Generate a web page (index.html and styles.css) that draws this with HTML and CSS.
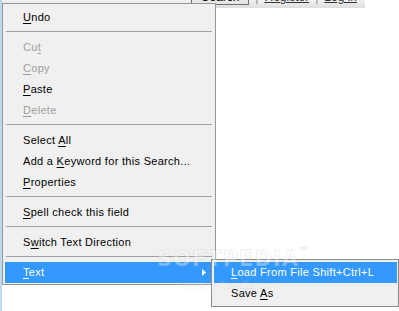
FILE: index.html
```html
<!DOCTYPE html>
<html>
<head>
<meta charset="utf-8">
<link rel="stylesheet" href="styles.css">
</head>
<body>
<div class="page">
  <div class="topbar">
    <div class="toplinks">
      <span class="btn">Search</span>
      <span class="pipe">|</span>
      <a class="lnk">Register</a>
      <span class="pipe">|</span>
      <a class="lnk">Log in</a>
    </div>
  </div>
  <div class="content"></div>
</div>

<div class="menu main">
  <div class="item"><span><u>U</u>ndo</span></div>
  <div class="sep"></div>
  <div class="item dis"><span>Cu<u>t</u></span></div>
  <div class="item dis"><span><u>C</u>opy</span></div>
  <div class="item"><span><u>P</u>aste</span></div>
  <div class="item dis"><span><u>D</u>elete</span></div>
  <div class="sep"></div>
  <div class="item"><span>Select <u>A</u>ll</span></div>
  <div class="item"><span>Add a <u>K</u>eyword for this Search...</span></div>
  <div class="item"><span><u>P</u>roperties</span></div>
  <div class="sep"></div>
  <div class="item"><span><u>S</u>pell check this field</span></div>
  <div class="sep"></div>
  <div class="item"><span>S<u>w</u>itch Text Direction</span></div>
  <div class="sep"></div>
  <div class="item hl"><span><u>T</u>ext</span><svg class="arrow" width="4" height="7" viewBox="0 0 4 7"><path d="M0 0 L4 3.5 L0 7 Z" fill="#fff"/></svg></div>
</div>

<div class="menu sub">
  <div class="item hl"><span><u>L</u>oad From File Shift+Ctrl+L</span></div>
  <div class="item"><span>Save <u>A</u>s</span></div>
</div>

<div class="watermark">
  <div class="wm-big">SOFTPEDIA<sup>™</sup></div>
  <div class="wm-small">www.softpedia.com</div>
</div>
</body>
</html>
```

FILE: styles.css
```css
html, body {
  margin: 0;
  padding: 0;
}
body {
  width: 399px;
  height: 311px;
  overflow: hidden;
  background: #ffffff;
  font-family: "Liberation Sans", Arial, sans-serif;
  font-size: 11px;
  color: #000;
  position: relative;
}
.page {
  display: flex;
  flex-direction: column;
  height: 311px;
  border-left: 2px solid #bcd9ee;
  box-sizing: border-box;
}
.topbar {
  width: 363px;
  height: 8px;
  overflow: hidden;
  background: linear-gradient(#f2f2f2, #dedede);
  display: flex;
  justify-content: flex-end;
}
.toplinks {
  display: flex;
  align-items: flex-start;
  gap: 6px;
  margin-top: -9px;
  padding-right: 8px;
  height: 14px;
  line-height: 13px;
}
.btn {
  border: 1px solid #707070;
  border-top: none;
  background: linear-gradient(#f6f6f6, #e4e4e4);
  padding: 0 9px;
  height: 13px;
  font-size: 12px;
}
.pipe {
  color: #888;
  font-size: 12px;
}
.lnk {
  color: #333;
  text-decoration: underline;
  font-size: 12px;
}
.content {
  flex: 1;
}

.menu {
  position: absolute;
  box-sizing: border-box;
  background: #f0f0f0;
  border: 1px solid #979797;
}
.main {
  left: 2px;
  top: 3px;
  width: 214px;
  padding: 3px 3px 1px 2px;
}
.sub {
  left: 211px;
  top: 259px;
  width: 188px;
  padding: 2px 1px 2px 2px;
  border-color: #8a8a8a;
}
.item {
  height: 21px;
  line-height: 21px;
  padding-left: 18px;
  padding-right: 6px;
  display: flex;
  align-items: center;
  justify-content: space-between;
  white-space: nowrap;
  letter-spacing: 0.3px;
}
.sub .item {
  padding-left: 17px;
}
.item.dis {
  color: #a0a0a0;
}
.item.hl {
  background: #3399ff;
  color: #fff;
}
.item u {
  text-decoration-thickness: 1px;
  text-underline-offset: 2px;
}
.sep {
  height: 1px;
  margin: 3px 0 5px 1px;
  background: #a0a0a0;
}
.arrow {
  display: block;
}

.watermark {
  position: absolute;
  left: 157px;
  top: 247px;
  pointer-events: none;
  font-family: "DejaVu Sans", sans-serif;
}
.wm-big {
  font-size: 21px;
  font-weight: bold;
  letter-spacing: 1px;
  color: rgba(255, 255, 255, 0.35);
  -webkit-text-stroke: 1px rgba(120, 120, 120, 0.12);
  line-height: 24px;
}
.wm-big sup {
  font-size: 8px;
  vertical-align: top;
  line-height: 8px;
}
.wm-small {
  margin-left: 24px;
  margin-top: 9px;
  font-size: 10px;
  color: rgba(255, 255, 255, 0.3);
  -webkit-text-stroke: 0.5px rgba(120, 120, 120, 0.12);
}
```
